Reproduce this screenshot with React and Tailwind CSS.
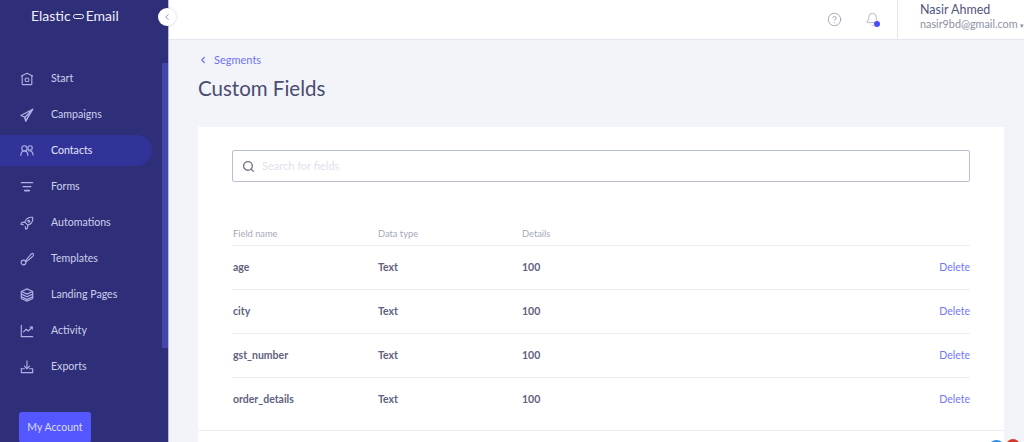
import React from "react";
import { Search, ChevronLeft, CircleHelp, Bell } from "lucide-react";

const ic = { fill: "none", stroke: "currentColor", strokeWidth: 1.3, strokeLinecap: "round", strokeLinejoin: "round" };

const Icon = ({ children }) => (
  <svg width="14" height="14" viewBox="0 0 16 16" {...ic} className="shrink-0 text-[#aeb0e6]">{children}</svg>
);

const NAV = [
  { label: "Start", icon: <><path d="M1.5 4.500 8 1.500l6.500 3" /><path d="M2.500 4.500v9.500a1 1 0 0 0 1 .5h9a1 1 0 0 0 1-.5V4.500" /><circle cx="8" cy="9" r="2.200" /></> },
  { label: "Campaigns", icon: <><path d="M14.500 1.500 1 8.500l4.500 2.200z" /><path d="M14.500 1.500 5.500 10.700l1 4.300z" /><path d="M14.500 1.500 6.500 15l-1-4.300" /></> },
  { label: "Contacts", active: true, icon: <><circle cx="5" cy="5" r="3" /><circle cx="11.500" cy="4.500" r="2.500" /><path d="M1 13c0-3 1.500-5 4-5s4 2 4 5" /><path d="M10 7.800c2.800-.3 4.800 1.500 5 4.700" /></> },
  { label: "Forms", icon: <><path d="M1.500 3h13" /><path d="M3.500 7.500h9" /><path d="M5.500 12h5" strokeWidth="2" /></> },
  { label: "Automations", icon: <><path d="M14.500 1.500c-4-.5-7.500 1.500-9 5.500L9 10.500c4-1.500 6-5 5.500-9z" /><path d="M5.500 7 2 7.500 1 9.500l3 .5" /><path d="M9 10.500 8.500 14l-2 1-.5-3" /><circle cx="10" cy="6" r="1" /></> },
  { label: "Templates", icon: <><path d="M14 1.500c-1 0-5.500 6-7.500 8.500l1 1c2.500-2 8-6.500 8-7.500 0-1-.5-2-1.500-2z" /><circle cx="4" cy="12" r="2.700" /></> },
  { label: "Landing Pages", icon: <><path d="M8 1 1.500 4 8 7l6.500-3z" /><path d="M1.500 7 8 10l6.500-3" /><path d="M1.500 10 8 13l6.500-3" /><path d="M1.500 4v8l6.500 3 6.500-3V4" /></> },
  { label: "Activity", icon: <><path d="M1.500 1.500v13h13" /><path d="M4 9l3-3 2.500 2L14 3.500" /><path d="M11.500 3.500H14V6" /></> },
  { label: "Exports", icon: <><path d="M8 1v8.500" /><path d="M5 7l3 3 3-3" /><path d="M1.500 10v4.500h13V10H11" /><path d="M5 10H1.500" /></> },
];

const ROWS = ["age", "city", "gst_number", "order_details"];

const NavItem = ({ item }) => (
  <div className={`flex items-center gap-[17px] h-[31px] shrink-0 w-[152px] pl-[20px] rounded-r-[16px] text-[10.6px] ${item.active ? "bg-[#323399] text-[#e3e4f7]" : "text-[#cfd0ee]"}`}>
    <Icon>{item.icon}</Icon>
    <span>{item.label}</span>
  </div>
);

const Sidebar = () => (
  <aside className="relative w-[169px] shrink-0 h-[442px] overflow-hidden bg-[#2e2f78] border-r border-[#b9bade] flex flex-col">
    <div className="h-[32px] shrink-0 flex items-center pl-[31px] text-[14px] text-[#eeeefa] leading-none">
      <span>Elastic</span>
      <span className="mx-[2px] w-[11px] h-[5px] rounded-full border border-[#eeeefa]" />
      <span>Email</span>
    </div>
    <nav className="mt-[31px] shrink-0 flex flex-col gap-[5px]">
      {NAV.map(n => <NavItem key={n.label} item={n} />)}
    </nav>
    <button className="mt-[30px] ml-[19px] w-[72px] h-[31px] shrink-0 rounded-[3px] bg-[#5457ff] text-[10.5px] text-[#dcdcff]">My Account</button>
    <div className="absolute left-[162px] top-[63px] w-[6px] h-[285px] bg-[#4345ad]" />
  </aside>
);

const Topbar = () => (
  <header className="h-[40px] shrink-0 bg-white border-b border-[#e4e6ee] flex justify-end">
    <div className="flex items-center gap-[23px] pr-[16px] text-[#a2a6b8]">
      <CircleHelp size={15} strokeWidth={1.500} />
      <div className="relative w-[16px] h-[16px]">
        <Bell size={15} strokeWidth={1.200} />
        <span className="absolute right-[1px] bottom-[1px] w-[6px] h-[6px] rounded-full bg-[#4a4ff5]" />
      </div>
    </div>
    <div className="w-[127px] border-l border-[#e4e6ee] pl-[22px] pt-[3px]">
      <p className="text-[12.5px] leading-[14px] text-[#53557e]">Nasir Ahmed</p>
      <p className="text-[10.8px] leading-[13px] text-[#8e90a3] whitespace-nowrap">nasir9bd@gmail.com <span className="text-[7px]">▾</span></p>
    </div>
  </header>
);

const Row = ({ name, last }) => (
  <div className={`flex items-center h-[44px] text-[10.5px] font-bold text-[#5f6280] ${last ? "" : "border-b border-[#eceef3]"}`}>
    <span className="w-[146px] pl-[1px]">{name}</span>
    <span className="w-[144px]">Text</span>
    <span className="flex-1">100</span>
    <span className="font-normal text-[#7477f7]">Delete</span>
  </div>
);

export default function App() {
  return (
    <div className="relative flex w-[1024px] h-[442px] overflow-hidden bg-[#f3f4f9]" style={{ fontFamily: "Lato, 'Noto Sans', sans-serif" }}>
      <Sidebar />
      <main className="flex-1 flex flex-col min-w-0">
        <Topbar />
        <div className="pl-[29px] pr-[20px] flex-1 flex flex-col min-h-0">
          <div className="mt-[14px] flex items-center text-[11px] leading-[12px] text-[#6f72f5]">
            <ChevronLeft size={10} strokeWidth={3} />
            <span className="ml-[6px]">Segments</span>
          </div>
          <h1 className="mt-[8px] text-[20.5px] leading-[28px] text-[#4a4c70]">Custom Fields</h1>
          <section className="mt-[25px] bg-white flex-1 px-[34px] pt-[23px] min-h-0">
            <div className="h-[32px] flex items-center gap-[7px] pl-[9px] rounded-[2px] border border-[#b9c0d2] text-[11px] text-[#dfe2ec]">
              <Search size={13} strokeWidth={2.500} className="text-[#6f7488]" />
              <span>Search for fields</span>
            </div>
            <div className="mt-[41px] flex items-center h-[23px] border-b border-[#eceef3] text-[9.300px] text-[#a5a9bb]">
              <span className="w-[146px] pl-[1px]">Field name</span>
              <span className="w-[144px]">Data type</span>
              <span>Details</span>
            </div>
            {ROWS.map((r, i) => <Row key={r} name={r} last={i === ROWS.length - 1} />)}
          </section>
        </div>
      </main>
      <button className="absolute left-[158px] top-[8px] w-[18px] h-[18px] rounded-full bg-white shadow-[0_0_3px_rgba(60,60,110,0.25)] flex items-center justify-center text-[#7d8296]">
        <ChevronLeft size={10} strokeWidth={2} />
      </button>
      <div className="absolute left-[198px] right-[20px] top-[430px] border-t border-[#eceef3]" />
      <div className="absolute left-[988px] top-[440px] w-[17px] h-[17px] rounded-full bg-[#2f8fe8]" />
      <div className="absolute left-[1006px] top-[439px] w-[14px] h-[14px] rounded-full bg-[#d2392b]" />
    </div>
  );
}
